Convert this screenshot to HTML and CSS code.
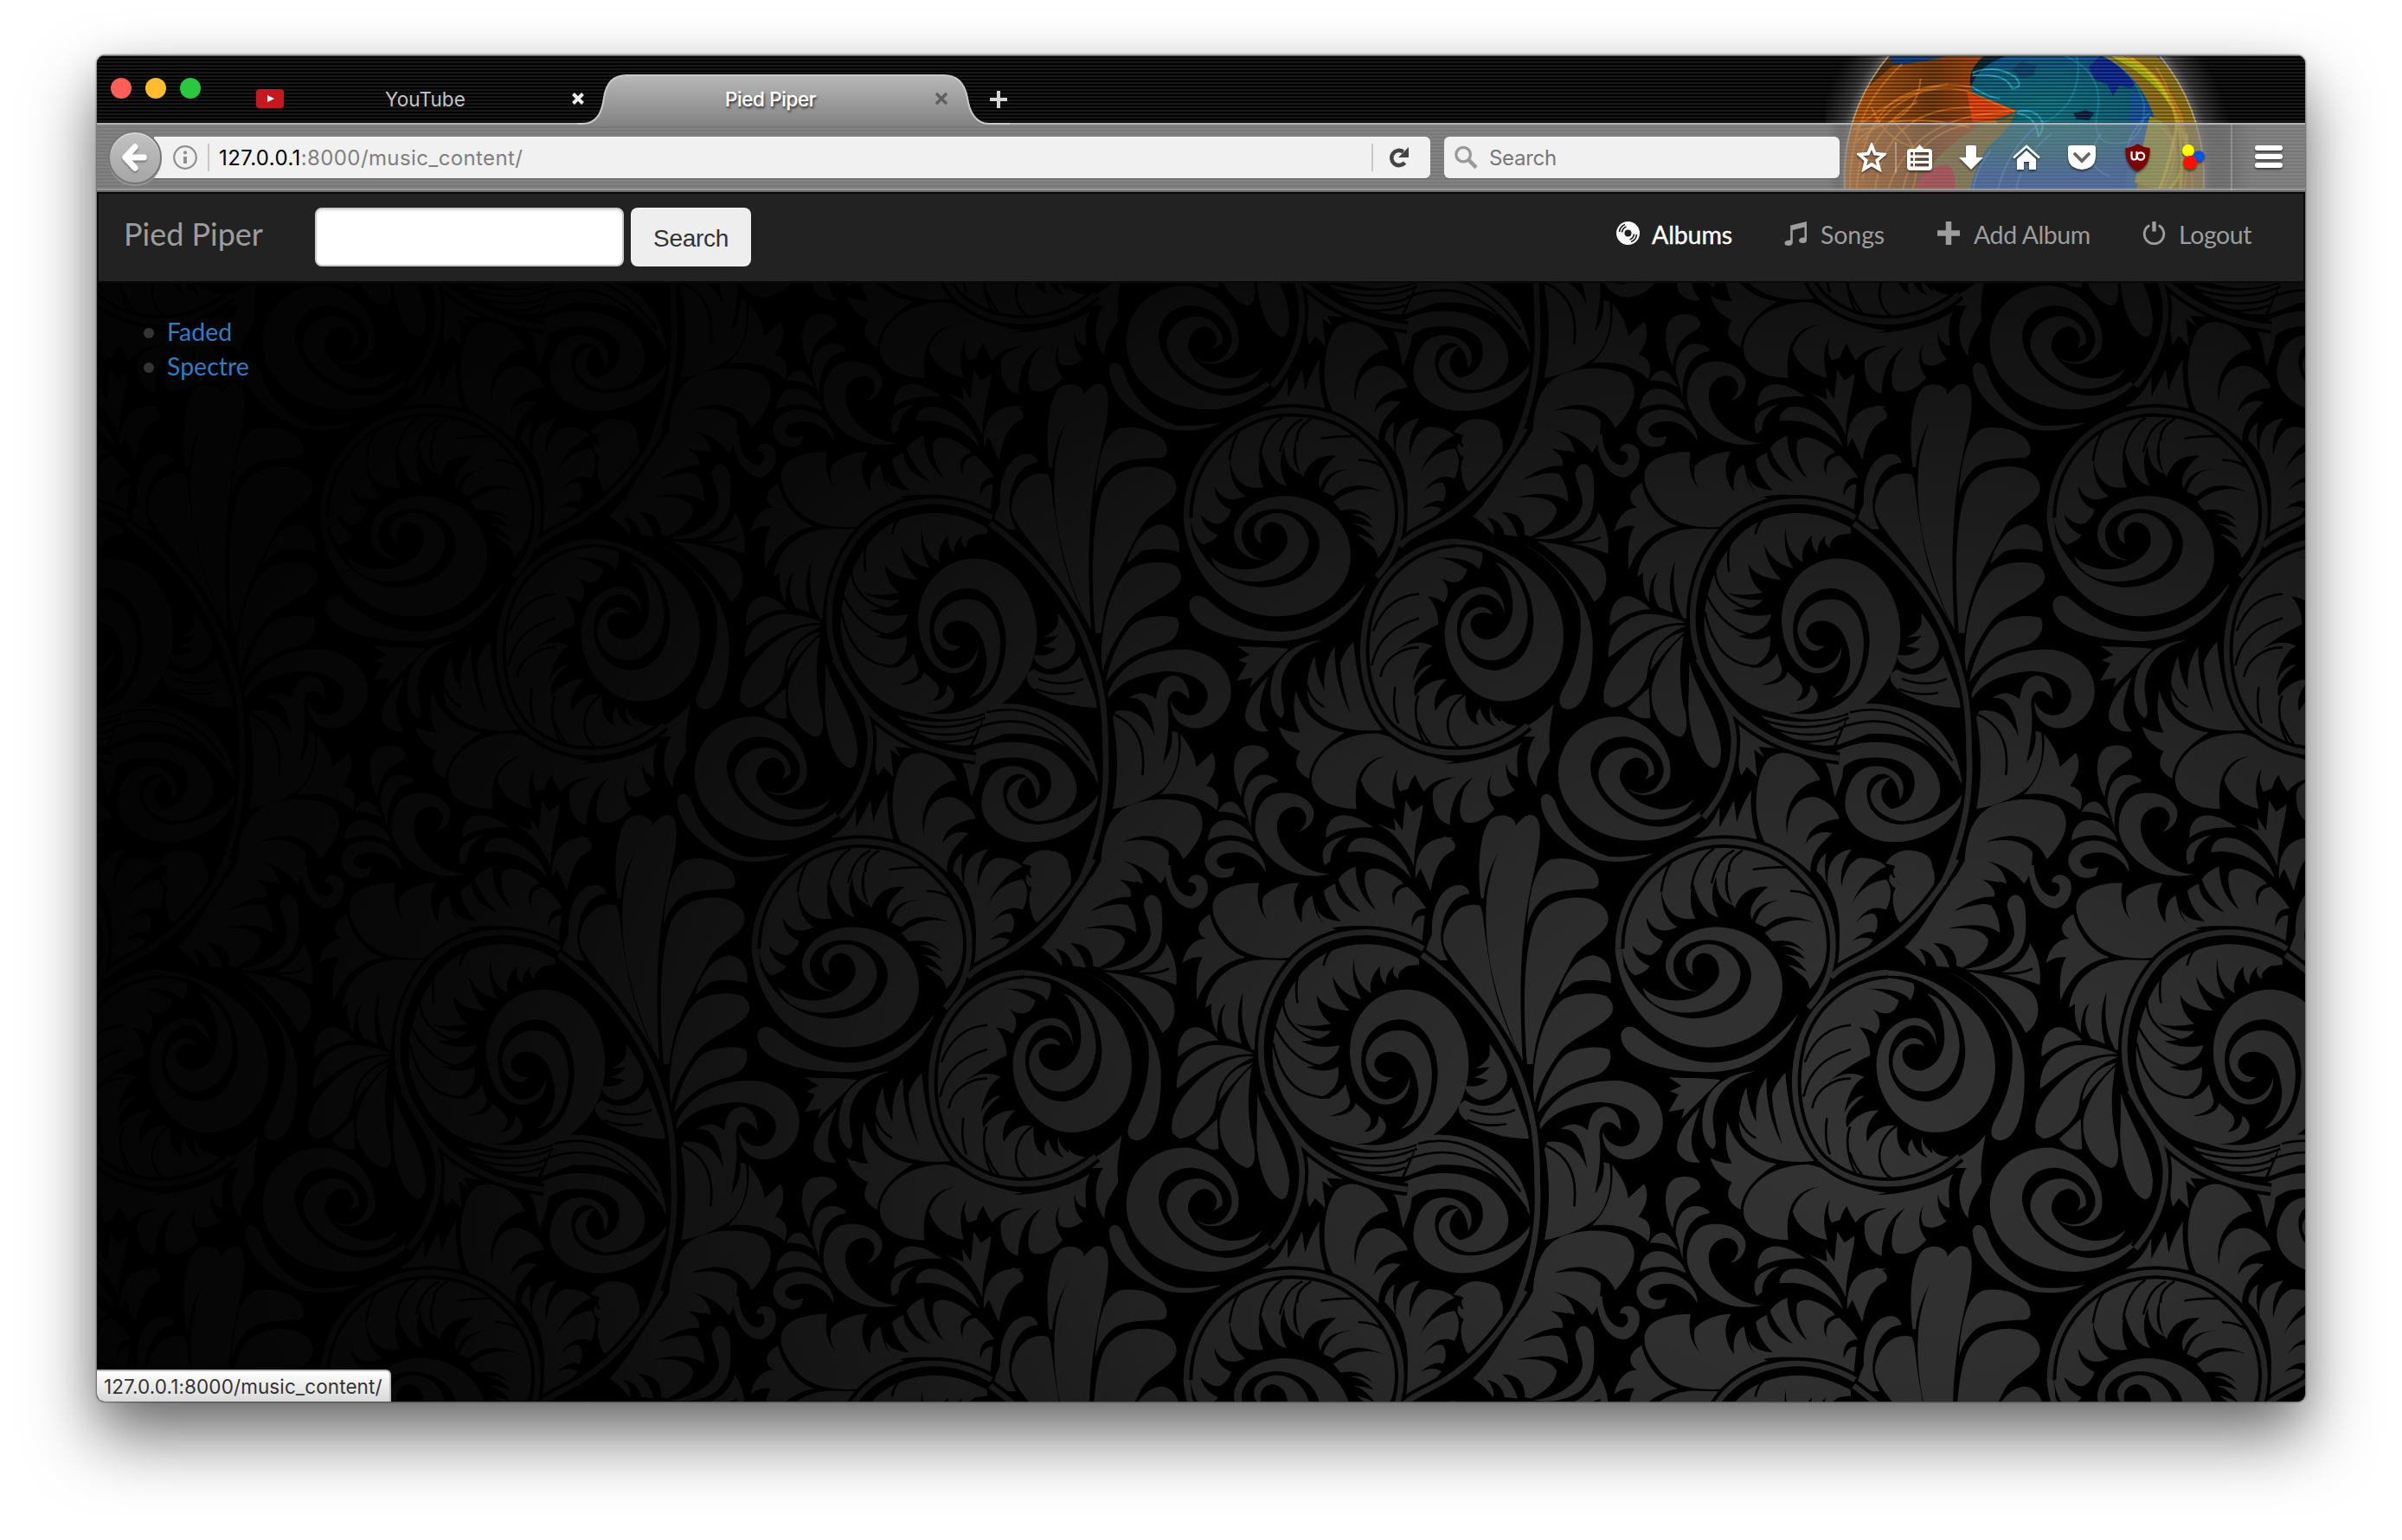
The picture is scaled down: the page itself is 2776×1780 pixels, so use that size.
FILE: index.html
```html
<!DOCTYPE html>
<html lang="en">
<head>
<meta charset="utf-8">
<title>Pied Piper</title>
<link rel="stylesheet" href="styles.css">
</head>
<body>
<main class="window">
  <svg class="persona" viewBox="0 0 1568 474" preserveAspectRatio="none" aria-hidden="true">
    <defs>
      <radialGradient id="halo"><stop offset=".8" stop-color="#fff" stop-opacity=".6"/><stop offset=".88" stop-color="#bbb" stop-opacity=".25"/><stop offset="1" stop-color="#888" stop-opacity="0"/></radialGradient>
      <radialGradient id="sea" cx=".5" cy=".4"><stop offset="0" stop-color="#006a78"/><stop offset=".6" stop-color="#035570"/><stop offset="1" stop-color="#0a3f9a"/></radialGradient>
      <linearGradient id="fur" x1="0" y1="0" x2="1" y2="0"><stop offset="0" stop-color="#b85400"/><stop offset=".5" stop-color="#6a3000"/><stop offset="1" stop-color="#c04000"/></linearGradient>
      <clipPath id="disc"><ellipse cx="649" cy="423" rx="588" ry="640"/></clipPath>
    </defs>
    <ellipse cx="649" cy="423" rx="700" ry="765" fill="url(#halo)"/>
    <g clip-path="url(#disc)">
      <rect width="1568" height="474" fill="#4b2a08"/>
      <path d="M200 0H1130L1240 200V474H420L470 200Z" fill="url(#sea)"/>
      <path d="M210 0H420L380 30Q300 40 220 30Z" fill="#04346e"/>
      <path d="M220 35Q330 25 420-5L520-5Q460 60 480 130Q540 160 625 190Q560 230 520 235Q420 270 420 480H60V180Z" fill="url(#fur)"/>
      <path d="M460 115Q480 150 540 155Q600 180 622 196Q560 220 480 230Z" fill="#e33c00"/>
      <path d="M520 235Q590 225 625 195Q600 250 560 290Q500 330 470 480H290Q340 340 520 235Z" fill="#6e5a20"/>
      <path d="M290 480Q310 380 400 380Q430 400 420 480Z" fill="#b01820"/>
      <path d="M520 0Q460 50 475 110Q500 30 600 0Z" fill="#021c24"/>
      <path d="M610 50L640 20L690 35L680 70L640 80Z" fill="#063c66"/>
      <path d="M860 40L900 0H960L1020 90L1000 115L960 105L940 140L920 100L880 85Z" fill="#06208a"/>
      <path d="M810 200L850 190L880 200L860 225L820 220Z" fill="#021a3a"/>
      <path d="M1000 120Q1080 160 1090 220L1060 480H980Z" fill="#0d4c96"/>
      <path d="M900 0H1080Q1200 110 1240 300V480H1010L1060 330Q1090 250 1070 200Q1020 60 900 0Z" fill="#8a6c10"/>
      <path d="M930 0Q1100 40 1130 180Q1090 110 1010 50Z" fill="#a8b400"/>
      <path d="M1060 210L1110 235Q1190 350 1120 480L1010 440Z" fill="#8c8a28"/>
      <g class="strands orange">
        <path d="M80 480Q70 200 250 30M100 480Q110 260 220 160Q340 80 480 110M120 300Q280 60 480 130Q600 190 620 195"/>
        <path d="M90 260Q230 130 400 100M100 260Q300 240 310 80M160 480Q190 180 480 180M200 480Q270 210 600 195M250 480Q290 230 560 230"/>
        <path d="M150 180Q200 320 350 330M230 240Q330 330 280 480M120 430Q150 250 300 160M100 300Q200 180 470 250"/>
        <path d="M960 0Q1190 90 1200 470M980 0Q1100 60 1160 200Q1200 330 1170 470M1080 40Q1180 200 1130 400M1100 250Q1180 320 1100 470"/>
      </g>
      <g class="strands yellow"><path d="M940 0Q1060 30 1110 130Q1180 240 1160 470M1000 10Q1130 100 1180 320M1150 230Q1130 360 1090 470M1180 270Q1190 390 1120 470"/></g>
      <g class="strands cyan">
        <path d="M480 60Q560 30 620 75Q650 110 610 115Q590 60 480 70M480 110Q530 145 570 150M625 195Q690 180 710 235Q710 270 695 280Q690 210 625 200"/>
        <path class="faint" d="M820 0Q840 90 790 170Q740 230 700 235M780 0Q910 60 890 190Q860 330 990 300Q1050 260 1040 160Q1010 60 910 0"/>
      </g>
      <g class="strands blue"><path d="M700 235Q590 330 560 480M740 270Q640 350 620 480M900 270Q830 380 930 420M1060 200Q960 300 1000 360M480 480Q490 390 540 330"/></g>
    </g>
    <ellipse cx="649" cy="423" rx="588" ry="640" class="rim"/>
  </svg>

  <header class="titlebar">
    <svg class="tabshape" viewBox="0 0 500 58" aria-hidden="true">
      <defs><linearGradient id="tab" x1="0" y1="0" x2="0" y2="1"><stop offset="0" stop-color="#b8b8b8"/><stop offset="1" stop-color="#838383"/></linearGradient></defs>
      <path d="M6 57C24 57 29 42 31 27C33 13 39 1 57 1H424C440 1 448 11 451 27C453 42 460 57 476 57V59H6Z" fill="url(#tab)"/>
      <path d="M0 57H6C24 57 29 42 31 27C33 13 39 1 57 1H424C440 1 448 11 451 27C453 42 460 57 476 57H500" fill="none" stroke="#c9c9c9" stroke-width="2"/>
    </svg>
    <div class="lights"><i class="red"></i><i class="amber"></i><i class="green"></i></div>
    <div class="tab first">
      <svg class="yt" viewBox="0 0 32 22"><rect width="32" height="22" rx="4" fill="#c4191e"/><path d="M13 7L21 11L13 15Z" fill="#fff"/></svg>
      <span class="label">YouTube</span>
      <svg class="x" viewBox="0 0 16 16"><path d="M2.5 2.5L13.5 13.5M13.5 2.5L2.5 13.5" stroke="#eee" stroke-width="4"/></svg>
    </div>
    <div class="tab current">
      <span class="label">Pied Piper</span>
      <svg class="x" viewBox="0 0 16 16"><path d="M2 2L14 14M14 2L2 14" stroke="#5f5f5f" stroke-width="3.4"/></svg>
    </div>
    <svg class="newtab" viewBox="0 0 20 20"><path d="M10 0V20M0 10H20" stroke="#d6d6d6" stroke-width="4"/></svg>
  </header>

  <div class="toolbar">
    <div class="back"><svg viewBox="0 0 32 34"><path d="M16 4L4 17L16 30M5 17H27" fill="none" stroke="#fff" stroke-width="7.5" stroke-linecap="round" stroke-linejoin="round"/></svg></div>
    <div class="url">
      <svg class="info" viewBox="0 0 28 28"><circle cx="14" cy="14" r="12.8" fill="none" stroke="#8f8f8f" stroke-width="2.2"/><circle cx="14" cy="8.4" r="2.1" fill="#8f8f8f"/><path d="M14 13V21" stroke="#8f8f8f" stroke-width="4"/></svg>
      <i class="bar"></i>
      <span class="address">127.0.0.1<span class="path">:8000/music_content/</span></span>
      <i class="bar end"></i>
      <svg class="reload" viewBox="0 0 24 26"><path d="M18.5 19A8.6 8.6 0 1 1 16.8 6.5" fill="none" stroke="#444" stroke-width="4.6"/><path d="M23 1V13H11Z" fill="#444"/></svg>
    </div>
    <div class="searchbox">
      <svg viewBox="0 0 28 28"><circle cx="10.5" cy="10.5" r="8.6" fill="none" stroke="#999" stroke-width="3.4"/><path d="M16.5 16.5L26 26" stroke="#999" stroke-width="4.6"/></svg>
      <span>Search</span>
    </div>
    <div class="tools">
      <svg class="t star" viewBox="0 0 32 32"><path d="M16 3L19.8 12L29.3 12.9L22 19.2L24.3 28.6L16 23.6L7.7 28.6L10 19.2L2.7 12.9L12.2 12Z" fill="none" stroke="#fff" stroke-width="3.6"/></svg>
      <i class="bar pale"></i>
      <svg class="t clip" viewBox="0 0 29 30"><path fill="#fff" fill-rule="evenodd" d="M4 5H10L14.5 0L19 5H25Q29 5 29 9V26Q29 30 25 30H4Q0 30 0 26V9Q0 5 4 5ZM9 9V12.500H25V9ZM9 15.500V19H25V15.500ZM9 22V25.500H25V22ZM4 9V12.500H7V9ZM4 15.500V19H7V15.500ZM4 22V25.500H7V22Z"/></svg>
      <svg class="t down" viewBox="0 0 28 28"><path fill="#fff" d="M8 2Q8 0 10 0H18Q20 0 20 2V14H28L14 28L0 14H8Z"/></svg>
      <svg class="t home" viewBox="0 0 32 30"><path fill="none" stroke="#fff" stroke-width="2.6" d="M1 15.500L16 2L31 15.500"/><path fill="#fff" d="M5 17L16 7L27 17V29H19V20H13V29H5Z"/></svg>
      <svg class="t pocket" viewBox="0 0 32 28"><path fill="#fff" d="M3 0H29Q32 0 32 3V12Q32 21 26 25Q16 31 6 25Q0 21 0 12V3Q0 0 3 0Z"/><path d="M8 10L16 18L24 10" fill="none" stroke="#666" stroke-width="3.8" stroke-linecap="round"/></svg>
      <svg class="t ublock" viewBox="0 0 28 32"><path fill="#7d0004" d="M14 0Q20 4.500 28 5Q29 25 14 32Q-1 25 0 5Q8 4.500 14 0Z"/><path d="M7 9V15Q7 18.500 10 18.500T13 15.500V9" fill="none" stroke="#fff" stroke-width="2.2"/><circle cx="17.500" cy="14.500" r="4.200" fill="none" stroke="#fff" stroke-width="2.2"/></svg>
      <svg class="t dots" viewBox="0 0 26 30"><circle cx="7" cy="7" r="7" fill="#ff0"/><circle cx="19.500" cy="13.500" r="6.300" fill="#0655e0"/><circle cx="9" cy="21" r="8" fill="#f81000"/></svg>
      <i class="bar tall"></i>
      <svg class="t menu" viewBox="0 0 32 28"><path d="M3 3H29M3 13H29M3 23H29" stroke="#fff" stroke-width="6" stroke-linecap="round"/></svg>
    </div>
  </div>

  <section class="page">
    <svg class="damask" viewBox="112 222 2552 1398" aria-hidden="true">
      <defs>
        <radialGradient id="shade" gradientUnits="userSpaceOnUse" cx="0" cy="0" r="1" gradientTransform="translate(2150 1330) scale(2050 1450)">
          <stop offset="0" stop-opacity="0"/><stop offset=".2" stop-opacity=".1"/><stop offset=".45" stop-opacity=".38"/><stop offset=".62" stop-opacity=".6"/><stop offset=".8" stop-opacity=".82"/><stop offset="1" stop-opacity=".92"/>
        </radialGradient>
        <g id="leaves">
          <path d="M0 365C150 350 300 420 390 530C450 620 460 720 420 810C370 900 290 935 210 925C110 910 30 800 32 690C35 590 100 530 170 530C220 535 240 580 240 625C230 580 200 555 160 555C110 560 70 620 75 690C85 770 140 820 210 820C290 810 340 740 340 640C335 520 270 430 150 390C100 380 50 380 0 400Z"/>
          <path d="M205 445C280 460 320 560 320 630C315 730 250 785 195 785C130 785 85 730 88 680C92 630 125 600 160 600C180 600 195 615 198 628C170 610 120 620 122 660C125 700 160 715 190 712C240 700 270 650 268 590C265 520 240 470 205 445Z"/>
          <path d="M70 390C-60 400-190 490-230 620C-270 760-250 920-160 1020C-90 1080-20 1110 70 1108C170 1105 260 1060 320 1010Q240 1020 220 975Q235 1010 215 990Q190 970 190 940Q180 990 210 1015Q165 1000 155 950Q130 980 150 1010Q95 990 105 905Q40 890 0 960Q-15 900 40 850Q-30 850-70 910Q-90 860-10 800Q-50 800-80 860Q-60 760-10 735Q-80 700-160 770Q-60 690 10 660Q10 600-30 560Q-60 540-170 580Q-20 540 30 585Q60 540 20 500Q90 540 110 470Q40 420-30 430Q120 420 150 470Q170 430 160 410Q120 395 70 390Z"/>
          <path d="M1200 640C1205 510 1300 425 1410 432C1530 440 1612 560 1612 690C1612 850 1500 990 1300 990C1200 990 1080 930 1010 860L1040 880C1120 960 1230 975 1300 970C1420 960 1500 870 1505 720C1505 620 1450 535 1370 535C1290 540 1235 600 1240 690C1245 770 1290 815 1330 812C1380 805 1400 770 1408 735C1410 800 1370 830 1320 830C1250 825 1200 740 1200 640Z"/>
          <path d="M1375 915C1440 900 1485 830 1485 720C1480 620 1430 570 1365 573C1300 575 1255 630 1255 680C1260 730 1295 755 1325 752L1350 735C1310 740 1285 710 1285 690C1290 655 1320 645 1350 648C1400 655 1430 700 1438 780C1440 840 1410 890 1375 915Z"/>
          <path d="M1440 325C1300 245 1150 265 1060 345C960 440 920 600 935 700C965 860 1080 960 1200 968C1300 970 1330 930 1325 900Q1315 875 1300 870Q1300 920 1250 925Q1290 890 1260 860L1220 825Q1210 870 1130 870Q1210 850 1200 810L1185 760Q1150 815 1090 810Q1170 780 1160 700Q1110 725 1050 700Q1150 690 1165 625Q1090 640 1030 610Q1110 610 1135 575Q1060 580 1010 550Q1060 565 1135 550Q1090 520 1085 450Q1110 500 1200 505Q1150 460 1140 385Q1170 450 1240 465Q1200 400 1215 320Q1210 410 1275 445Q1260 400 1305 350Q1300 390 1325 415Q1320 380 1355 350Q1340 380 1370 395Q1360 370 1400 350L1440 345Z"/>
          <path d="M665 1230C700 1265 780 1260 810 1200C835 1130 770 1000 640 980C520 975 425 1060 425 1180C430 1320 560 1410 720 1410C850 1405 960 1320 1010 1200L1000 1190C960 1300 860 1365 770 1362C640 1355 535 1240 537 1150C545 1080 600 1045 660 1050C740 1060 800 1120 790 1180C770 1250 710 1260 665 1230Z"/>
          <path d="M895 1265C870 1320 810 1340 745 1338C650 1325 565 1240 565 1180C570 1120 620 1085 680 1087C730 1095 765 1140 758 1180L725 1200C750 1175 740 1130 700 1122C660 1125 635 1160 640 1200C660 1260 740 1305 800 1302C840 1300 870 1290 895 1265Z"/>
          <path d="M365 1270C370 1240 400 1240 415 1275C440 1360 510 1440 600 1465C660 1470 720 1460 755 1455C700 1485 620 1490 560 1475C450 1430 370 1360 365 1270Z"/>
          <path d="M560 0C555 80 600 150 655 150C700 140 720 80 700 50C680 25 640 30 640 60C670 55 680 90 650 108C610 110 580 60 578 0Z"/>
          <path d="M130 285C220 200 260 60 330 20C380 0 440 20 460 60L400 50Q450 80 440 110Q380 105 300 160Q400 125 430 140Q460 180 460 235Q400 190 280 220Q400 210 420 260Q420 310 330 355L310 350Q310 270 230 270Q270 300 285 355L240 350Q230 300 180 290Q210 330 200 350Q170 310 130 285Z"/>
          <path d="M485 140C490 90 540 90 548 150C555 250 545 290 500 330C450 365 380 370 340 360C430 350 500 300 510 240C510 200 490 170 485 140Z"/>
          <path d="M460 375C520 350 550 320 565 272C590 310 605 360 598 415C560 400 520 390 460 375Z"/>
          <path d="M350 370C400 380 520 390 570 440C605 480 600 550 550 582C520 520 450 430 350 370Z"/>
          <path d="M280 370C400 420 540 560 545 720C548 850 520 950 460 955C425 950 420 920 450 870C500 780 510 680 500 610C480 520 390 420 280 370Z"/>
          <path d="M410 935C400 1000 390 1040 397 1100C370 1150 350 1170 350 1225C310 1180 310 1100 345 1050L300 1050L320 1010C360 990 390 960 410 935Z"/>
          <path d="M-80 1135C60 1160 200 1130 300 1070C270 1110 290 1180 285 1190Q250 1180 245 1140Q240 1200 275 1235Q230 1270 195 1250Q180 1220 195 1180Q160 1240 205 1300Q150 1360 100 1345Q70 1320 100 1230L130 1190Q50 1240 50 1355Q-10 1340-10 1250Q-10 1210 70 1190Q0 1190-40 1240Q-80 1180-80 1135Z"/>
          <path d="M605 665C600 600 630 560 670 562C710 570 740 600 745 608C690 610 650 630 605 665Z"/>
          <path d="M600 775C595 700 640 640 720 625C780 620 840 640 868 655C740 650 680 720 600 775Z"/>
          <path d="M585 930C570 850 640 780 680 740C740 690 800 655 870 665C780 700 740 760 735 830C725 900 640 950 610 948Z"/>
          <path d="M745 820C755 740 800 700 865 685C820 730 790 760 745 820Z"/>
          <path d="M860 700C850 760 840 830 860 940C880 1000 870 1050 845 1050C780 1030 740 950 750 880C760 820 810 740 860 700Z"/>
          <path d="M665 950L740 880L745 985C710 990 690 980 665 950Z"/>
          <path d="M880 790C900 880 980 980 990 1090C990 1140 980 1160 960 1158C900 1130 870 1000 878 900Z"/>
          <path d="M725 150C720 100 780 60 885 62C870 130 890 200 990 242C900 210 890 150 900 110C930 80 980 60 1025 62C990 110 1010 170 1035 200C1030 150 1040 120 1070 105C1080 180 1100 210 1170 230C1080 260 1040 300 1000 320C930 330 820 320 770 250C740 210 725 180 725 150Z"/>
          <path d="M715 170C730 240 780 300 840 320C740 340 700 400 670 470C665 400 670 350 690 320C660 315 640 325 620 340C630 290 660 255 700 255C670 240 660 200 715 170Z"/>
          <path d="M700 495C710 400 790 330 900 328L985 330C920 400 890 500 885 640L860 640C830 580 820 540 830 440C800 520 815 580 825 620L775 600Q740 540 770 480Q740 500 740 585Q715 540 720 480Z"/>
          <path d="M1085 150Q1100 190 1170 195Q1120 150 1110 90Q1130 70 1150 65Q1150 130 1240 165Q1180 110 1160 50Q1180 20 1220 5Q1220 100 1290 155Q1240 80 1255 25Q1280 0 1330 25Q1380 50 1385 65Q1330 80 1355 145Q1350 80 1400 75Q1440 110 1465 150Q1410 150 1415 215Q1430 170 1460 175L1450 270C1350 210 1200 200 1130 220Q1090 190 1085 150Z"/>
          <path d="M1145 1420C1100 1350 1100 1200 1150 1130C1200 1080 1290 1110 1335 1200C1260 1210 1200 1290 1220 1390C1220 1300 1260 1250 1320 1260C1370 1275 1400 1320 1400 1335C1340 1340 1290 1370 1285 1420C1310 1380 1350 1375 1375 1385C1340 1420 1300 1450 1300 1520C1250 1470 1200 1440 1145 1420Z"/>
          <path d="M895 1400C950 1370 970 1330 985 1290V1365Q1010 1320 1035 1270L1045 1345Q1060 1290 1095 1235C1090 1300 1100 1360 1115 1405L1000 1395Z"/>
          <path d="M1040 980C1090 1050 1140 1070 1190 1090L1120 1085L1140 1120L1105 1095L1115 1190L1080 1155L1060 1185C1040 1130 1060 1050 1040 980Z"/>
          <path d="M1300 1110L1420 1120L1410 1190L1385 1260C1370 1200 1370 1150 1340 1130Z"/>
          <path d="M1130 975C1230 1010 1350 1000 1430 975L1380 1080C1280 1085 1180 1040 1130 975Z"/>
          <path d="M120 190C180 130 230 60 225 0C220-50 150-60 100-40Q80 20 150 50Q100 30 90 50Q130 70 135 100Q140 130 120 190Z"/>
          <g transform="translate(1500)">
            <path d="M-130 1110C-60 1070 0 1065 60 1070C170 1080 255 1160 250 1240C240 1310 170 1345 110 1342C50 1330 5 1290 8 1250C15 1210 50 1192 80 1190C40 1220 30 1270 80 1300C150 1290 180 1220 150 1165C110 1120 40 1118-20 1125C-60 1130-80 1150-100 1165Z"/>
            <path d="M-80 1280C-75 1210-40 1155 20 1152C80 1150 135 1190 120 1250L110 1270C110 1220 80 1170 40 1180C-10 1190-15 1250 10 1300C60 1370 140 1360 210 1335C270 1310 310 1280 330 1240C320 1340 200 1415 90 1415C0 1415-80 1360-80 1280Z"/>
            <path d="M618 260C620 420 720 620 930 632C1090 635 1200 540 1200 420C1200 300 1090 215 970 215C870 215 795 280 795 350C800 410 850 440 905 437C850 430 820 390 822 340C830 285 890 258 950 260C1030 265 1090 320 1092 380C1090 470 1000 530 890 532C770 525 690 450 650 350L640 260Z"/>
            <path d="M715 425C730 480 790 510 860 512C980 510 1055 450 1055 370C1045 310 990 272 940 274C890 280 862 310 865 340C868 365 880 375 892 380C880 340 890 308 930 305C965 310 985 340 980 380C965 430 900 470 830 470C780 468 740 450 715 425Z"/>
            <path d="M640 590C645 555 680 550 710 580C780 640 860 685 960 685C1080 685 1190 600 1255 515C1200 640 1080 715 950 718C800 720 640 680 640 590Z"/>
            <path d="M645 300C640 100 800-65 1000-68C1150-65 1240 0 1300 90C1380 220 1370 350 1295 430Q1290 400 1270 385L1220 345Q1250 350 1285 370Q1240 310 1200 310Q1240 310 1280 325Q1240 280 1200 280Q1240 270 1275 300Q1240 250 1165 265L1140 235Q1220 170 1310 200Q1200 150 1140 215L1105 200Q1130 120 1210 120Q1110 120 1095 190Q1070 140 1150 75Q1060 70 1035 150Q1000 100 1015 0Q980 90 1030 140Q970 120 970 40Q940 110 978 180Q920 170 890 60Q870 130 898 185Q800 200 780 90Q780 180 835 215Q760 250 728 180Q730 240 785 262Q780 290 750 310Q720 320 680 280Q690 330 740 350Q730 370 690 383Q660 370 645 300Z"/>
            <path d="M355 910C390 800 500 740 640 748C740 765 790 830 785 900C780 970 720 1025 650 1020C600 1010 575 975 577 925C600 990 690 1000 705 910C705 850 630 822 560 822C480 830 400 850 355 925Z"/>
            <path d="M375 985C390 1060 400 1180 375 1300C450 1290 530 1250 560 1220C600 1170 610 1100 600 1035L580 1030C585 1080 570 1110 550 1140C560 1080 575 1020 565 940C565 890 600 870 640 920C640 860 610 835 580 838C530 850 530 900 525 920C490 890 460 895 430 915C480 910 510 950 522 1050C500 990 450 950 385 960Z"/>
            <path d="M1020 1380C1060 1370 1080 1330 1070 1300C1050 1250 980 1235 930 1250C880 1270 865 1330 870 1380C890 1470 1000 1560 1130 1525C1050 1530 950 1450 945 1370C940 1310 990 1285 1020 1295C1055 1310 1055 1350 1020 1380Z"/>
            <path d="M905 1520C910 1470 850 1410 780 1410C720 1415 690 1450 695 1490C710 1540 760 1550 790 1530L800 1500C770 1515 740 1510 735 1480C740 1455 790 1445 830 1455C870 1470 890 1490 905 1520Z"/>
            <path d="M155 115C140 20 150-120 190-160C230-190 290-160 270-130C220-60 170 20 165 115Z"/>
            <path d="M175 110C190-20 240-120 310-170C360-190 365-130 355-60C340 60 270 200 300 680L280 640C200 450 160 280 175 110Z"/>
            <path d="M315 210C320 100 340 0 400-20C450-30 520-15 550 20C575 60 560 80 540 82C480 85 420 85 380 110C350 130 325 170 315 210Z"/>
            <path d="M315 690C295 450 310 280 340 200C370 130 440 110 500 113C580 120 610 170 590 210C560 260 500 270 470 330C400 470 350 540 335 690Z"/>
            <path d="M25 240C40 170 90 125 150 140C165 160 160 200 185 340C200 450 240 560 290 665L260 610C180 480 90 380 50 320C30 290 20 270 25 240Z"/>
            <path d="M425 450C440 380 490 315 545 313C590 320 610 360 605 410C560 395 500 395 470 410Z"/>
            <path d="M335 770C340 600 390 500 440 465C490 440 560 440 590 455C620 480 620 510 590 535C540 580 460 600 420 660C380 720 355 760 340 830Z"/>
            <path d="M350 860C370 760 420 670 460 650C500 630 570 625 600 640C615 680 590 720 540 735C480 750 420 770 350 860Z"/>
            <path d="M-15 240C-20 130 30 60 90 70Q115 80 115 100C60 100 30 160 22 200C10 240 15 290 40 330L-40 330Q-40 290-15 240Z"/>
            <path d="M-60 0Q-40-60 30-100Q80-80 60-50Q0-30-20 90Z"/>
            <path d="M185 620C230 680 250 720 245 740C240 790 190 810 150 815C110 800 95 780 105 765Q150 775 180 745L130 735Q160 730 185 700L135 705Q170 690 185 660Z"/>
            <path d="M100 815C150 850 220 840 260 770L310 900L325 950L250 945C150 920 60 880 80 830Z"/>
            <path d="M-60 940C60 920 180 960 250 1030C300 1090 320 1150 325 1215C260 1080 150 1030 0 1040L-110 1080L-80 1010Z"/>
            <path d="M610 1040C640 1080 660 1110 665 1155L720 1105C740 1140 730 1180 700 1220C740 1230 750 1260 735 1305C690 1260 620 1240 540 1250C600 1190 615 1120 610 1040Z"/>
            <path d="M335 1480C340 1380 370 1320 430 1290C500 1260 600 1260 660 1290C700 1330 700 1390 620 1475C590 1400 500 1370 410 1415C480 1400 540 1410 570 1450C570 1500 560 1540 540 1560Q500 1500 410 1480Q470 1500 480 1560L400 1530L300 1540Z"/>
            <path d="M60 1490C90 1440 150 1430 190 1460C230 1500 230 1540 220 1580L150 1560Q130 1500 60 1490Z"/>
            <path d="M1318 20Q1320-20 1352-42Q1340 20 1358 75Q1345-40 1440-55Q1395 0 1405 75Q1420-10 1470-25Q1530-25 1560 5Q1480 40 1440 135Q1480 60 1560 50Q1590 90 1560 155Q1500 130 1455 200Q1490 160 1520 170Q1540 200 1520 235Q1490 220 1440 265Q1480 240 1515 260L1480 305C1440 310 1400 330 1380 375C1420 200 1390 90 1318 20Z"/>
            <path d="M1600 190Q1570 120 1592 80Q1560 60 1575 30Q1600 70 1640 80Q1580 50 1585 15C1620-50 1700-40 1725 20C1740 90 1690 150 1610 200Z"/>
            <path d="M805 735C860 740 920 735 985 745C940 790 900 830 850 880L860 845L805 855L840 795L810 785L850 765Z"/>
            <path d="M1105 715C1020 720 960 760 935 820C915 880 915 960 960 985C980 960 960 930 960 900C950 820 1000 740 1105 715Z"/>
            <path d="M915 840C860 890 820 960 840 1000C860 1030 890 1035 915 1030C880 990 870 950 915 840Z"/>
            <path d="M1210 720C1220 850 1250 960 1320 1025C1200 1040 1100 1010 1060 940C1040 890 1050 820 1075 770Q1080 840 1110 890Q1100 800 1145 735Q1140 860 1200 970Q1160 840 1165 790Q1180 750 1210 720Z"/>
            <path d="M1010 890C1030 960 1080 1020 1180 1035C1110 1080 1060 1130 1055 1195C1010 1170 1000 1140 1025 1100C980 1080 960 1050 950 1015C980 1030 1000 1035 1025 1035C1000 990 1000 940 1010 890Z"/>
            <path d="M1065 1190C1075 1110 1160 1038 1290 1038C1370 1050 1450 1130 1560 1135L1500 1150Q1420 1150 1400 1230L1370 1240Q1350 1200 1365 1160Q1330 1210 1355 1300Q1260 1280 1235 1200Q1260 1130 1330 1115Q1200 1130 1220 1300C1130 1300 1060 1260 1065 1190Z"/>
            <path d="M1290 1350L1355 1375L1350 1330L1380 1375L1390 1270L1415 1310L1450 1285C1450 1340 1420 1400 1420 1500C1390 1430 1350 1380 1290 1350Z"/>
            <path d="M1115 1400C1110 1350 1140 1320 1180 1322C1220 1325 1250 1345 1280 1365C1220 1360 1150 1370 1115 1400Z"/>
            <path d="M1110 1495C1090 1440 1110 1410 1190 1390C1140 1420 1130 1450 1130 1480Z"/>
            <path d="M1190 1440C1200 1400 1240 1390 1290 1410C1350 1440 1390 1480 1410 1540C1350 1470 1270 1440 1190 1450Z"/>
            <path d="M1425 1540C1420 1450 1460 1390 1560 1400C1500 1420 1460 1470 1425 1540Z"/>
            <path d="M820 1260C790 1200 780 1110 830 1085C880 1070 920 1090 915 1120C890 1150 830 1150 820 1260Z"/>
            <path d="M830 1280C830 1210 870 1170 920 1185C960 1200 950 1210 930 1210C870 1230 850 1290 855 1370Z"/>
            <path d="M740 1310C760 1270 790 1265 810 1290L840 1335C810 1315 780 1310 740 1310Z"/>
            <path d="M705 1410C710 1350 750 1325 800 1345C840 1365 860 1390 865 1415C810 1385 750 1385 705 1410Z"/>
          </g>
        </g>
        <g id="veins">
          <path d="M940 560C980 640 1040 690 1110 700M935 620C960 740 1020 810 1130 805M970 450C960 540 1030 600 1110 610M1020 380Q1010 430 1018 475M1110 345Q1120 290 1170 275M1130 990C1250 1030 1350 1020 1430 985M1170 1020C1250 1050 1350 1050 1410 1020M1215 1052C1270 1075 1340 1070 1390 1050"/>
          <path d="M100 905C20 960 30 1060 90 1090M-60 910C-80 960-60 1050-30 1080M-140 880Q-150 950-130 1000M-220 800C-200 700-130 660-60 640M-215 680C-180 590-120 560-60 555M-190 840C-180 780-120 740-60 740M-60 1000Q-40 1050-20 1070"/>
          <path d="M460 375Q530 380 570 360"/>
          <g transform="translate(1500)">
            <path d="M780 90C790 20 810-20 860-50M885 80C890 20 920-30 960-55M955 60C970 0 990-30 1030-50M1100 15Q1160 5 1220 8M1230 90Q1280 90 1320 120M1015 20Q1010-20 1060-50"/>
            <path d="M-60 965C80 930 200 1000 290 1130M-100 1020C60 960 180 1010 310 1190M120 850Q200 880 270 850M110 885Q170 910 240 898M240 945Q300 955 330 955M385 975C460 1010 490 1080 478 1180M1045 860Q1060 920 1105 945"/>
          </g>
        </g>
        <g id="gaps">
          <path d="M1455 290C1300 200 1120 220 1010 330C920 430 880 560 895 690C910 800 960 880 1040 970C1150 1070 1270 1110 1400 1125"/>
          <path d="M310-20C220 150 100 260-20 320C-60 340-100 360-125 390"/>
          <path d="M70 372C-70 378-195 480-234 620C-270 760-250 920-160 1020C-90 1080-20 1105 70 1105C170 1105 250 1070 320 1010"/>
          <path d="M910 780C980 900 1030 950 1035 1060C1035 1160 1000 1250 930 1330"/>
          <g transform="translate(1500)"><path d="M-50 310C60 390 180 500 270 690C340 850 350 960 350 1100C360 1280 320 1420 260 1560"/><path d="M1290 495C1400 380 1400 200 1310 80C1230-20 1150-78 1000-82C820-85 630 60 630 290"/></g>
        </g>
      </defs>
      <defs>
        <g id="leafrow"><use href="#leaves"/><use href="#leaves" x="2994"/><use href="#leaves" x="5988"/><use href="#leaves" x="8982"/><use href="#leaves" x="11976"/></g>
        <g id="veinrow"><use href="#veins"/><use href="#veins" x="2994"/><use href="#veins" x="5988"/><use href="#veins" x="8982"/><use href="#veins" x="11976"/></g>
        <g id="gaprow"><use href="#gaps"/><use href="#gaps" x="2994"/><use href="#gaps" x="5988"/><use href="#gaps" x="8982"/><use href="#gaps" x="11976"/></g>
      </defs>
      <g transform="translate(-836 3.3) scale(.33333)">
        <g class="leaf"><use href="#leafrow"/><use href="#leafrow" x="-1497" y="1495"/><use href="#leafrow" y="2990"/><use href="#leafrow" x="-1497" y="4485"/></g>
        <g class="vein"><use href="#veinrow"/><use href="#veinrow" x="-1497" y="1495"/><use href="#veinrow" y="2990"/><use href="#veinrow" x="-1497" y="4485"/></g>
        <g class="gap"><use href="#gaprow"/><use href="#gaprow" x="-1497" y="1495"/><use href="#gaprow" y="2990"/><use href="#gaprow" x="-1497" y="4485"/></g>
        <g class="stem"><use href="#gaprow"/><use href="#gaprow" x="-1497" y="1495"/><use href="#gaprow" y="2990"/><use href="#gaprow" x="-1497" y="4485"/></g>
      </g>
      <rect x="112" y="222" width="2552" height="1398" fill="url(#shade)"/>
    </svg>

    <nav class="navbar">
      <a class="brand">Pied Piper</a>
      <div class="field"></div>
      <div class="button">Search</div>
      <div class="links">
        <a class="active albums"><svg viewBox="0 0 27 27"><circle cx="13.500" cy="13.500" r="13.500" fill="#fff"/><circle cx="13.500" cy="13.500" r="4" fill="#222"/><path d="M3.500 12A10 10 0 0 1 10 3.500M6.500 12.500A7.500 7.500 0 0 1 11.500 6M23.500 15A10 10 0 0 1 17 23.500M20.500 14.500A7.500 7.500 0 0 1 15.500 21" fill="none" stroke="#222" stroke-width="1.700"/></svg><span>Albums</span></a>
        <a class="songs"><svg viewBox="0 0 26 28"><path d="M6.700 4.500L25.500 0V21.500Q25.500 25 21 25Q16.500 25 16.500 22Q17 18 23 18.500V6.500L9.300 10V24Q9 28 4.500 28Q0 28 0 25Q0 21.500 6.700 21.500Z" fill="#9d9d9d"/></svg><span>Songs</span></a>
        <a class="add"><svg viewBox="0 0 26 26"><path d="M13 1V25M1 13H25" stroke="#9d9d9d" stroke-width="6.500" stroke-linecap="square" stroke-linejoin="round"/></svg><span>Add Album</span></a>
        <a class="logout"><svg viewBox="0 0 28 28"><path d="M8.500 4.600A11.700 11.700 0 1 0 19.500 4.600" fill="none" stroke="#9d9d9d" stroke-width="3"/><path d="M14 0V12" stroke="#9d9d9d" stroke-width="4.500"/></svg><span>Logout</span></a>
      </div>
    </nav>
    <ul class="songlist"><li><a>Faded</a></li><li><a>Spectre</a></li></ul>
    <div class="status">127.0.0.1:8000/music_content/</div>
  </section>
</main>
</body>
</html>
```
FILE: styles.css
```css
* { box-sizing: border-box; }
body { margin: 0; background: #fff; font-family: Inter, "Liberation Sans", sans-serif; height: 1780px; overflow: hidden; }
svg { display: block; flex: none; }
.window {
  position: relative; width: 2552px; height: 1556px; margin: 64px 112px; display: flex; flex-direction: column;
  border-radius: 9px; overflow: hidden; background: #000;
  box-shadow: 0 0 2px 1px rgba(0,0,0,.45), 0 40px 80px rgba(0,0,0,.56), 0 10px 40px rgba(0,0,0,.1);
}
.persona { position: absolute; left: 1998px; top: 0; width: 554px; height: 158px; }
.strands path { fill: none; stroke-width: 6; opacity: .5; }
.orange path { stroke: #ff8c1a; }
.yellow path { stroke: #e0cf20; stroke-width: 10; }
.cyan path { stroke: #20b4d0; opacity: .8; }
.cyan .faint { opacity: .35; }
.blue path { stroke: #3a8ce0; }
.rim { fill: none; stroke: #ffd9a0; stroke-width: 5; opacity: .6; }

.titlebar {
  position: relative; height: 80px; display: flex; align-items: flex-start; flex: none;
  background: repeating-linear-gradient(rgba(5,5,5,.25) 0 2px, rgba(255,255,255,.09) 2px 4px);
  border-top: 1px solid #666; border-bottom: 2px solid #b4b4b4;
}
.tabshape { position: absolute; left: 555px; top: 21px; width: 500px; height: 58px; }
.lights { display: flex; gap: 16px; margin: 25px 0 0 16px; }
.lights i { width: 24px; height: 24px; border-radius: 50%; }
.red { background: #ff5f57; }
.amber { background: #ffbd2e; }
.green { background: #28c940; }
.tab { display: flex; position: relative; height: 32px; margin-top: 33px; align-items: center; font-size: 22.500px; }
.first { margin-left: 64px; width: 380px; color: #c4c4c4; }
.first .yt { width: 32px; height: 22px; }
.first .label { margin-left: 117px; width: 93px; letter-spacing: .1px; }
.first .x { margin-left: 122px; }
.x { width: 16px; height: 16px; }
.current { margin-left: 162px; width: 262px; color: #fff; font-weight: 500; text-shadow: 1px 2px 3px #222, 0 0 1px #fff; }
.current .label { width: 106px; white-space: nowrap; letter-spacing: -.4px; }
.current .x { margin-left: 136px; }
.newtab { position: relative; width: 20px; height: 20px; margin: 40px 0 0 44px; }

.toolbar {
  position: relative; height: 78px; display: flex; align-items: center; flex: none; padding-bottom: 2px;
  background: repeating-linear-gradient(rgba(255,255,255,.03) 0 2px, rgba(0,0,0,.05) 2px 4px), linear-gradient(90deg, #7e7e7e 0 2000px, rgba(150,150,150,.5) 2030px 2400px, #7e7e7e 2490px);
  box-shadow: inset 0 -2px #666, inset 0 -4px #999;
}
.back { position: relative; z-index: 1; width: 62px; height: 62px; margin-left: 13px; border-radius: 50%; display: flex; align-items: center; justify-content: center; background: linear-gradient(#c2c2c2, #a6a6a6); border: 2px solid #777; box-shadow: 0 2px #999, inset 0 2px #d2d2d2; }
.back svg { width: 30px; height: 34px; filter: drop-shadow(0 2px 1px #777); }
.url, .searchbox { display: flex; align-items: center; height: 48px; background: #f1f1f1; border-radius: 0 6px 6px 0; box-shadow: 0 1px #666; font-size: 24px; }
.url { width: 1475px; margin-left: -9px; padding-left: 22px; }
.info { width: 28px; height: 28px; }
.bar { width: 2px; height: 32px; background: #c8c8c8; flex: none; }
.url .bar { margin-left: 12px; }
.address { margin-left: 11px; width: 1332px; letter-spacing: .39px; padding-top: 1px; }
.url .end { margin-left: 0; }
.path { color: #7f7f7f; }
.reload { width: 24px; height: 26px; margin-left: 18px; }
.searchbox { width: 457px; margin-left: 16px; border-radius: 6px; padding-left: 12px; color: #777; }
.searchbox svg { width: 27px; height: 28px; }
.searchbox span { margin-left: 13px; letter-spacing: -.3px; padding-top: 1px; }
.tools { display: flex; align-items: center; height: 100%; }
.t { filter: drop-shadow(0 2px 1px rgba(0,0,0,.5)); }
.star { width: 34px; height: 34px; margin-left: 20px; }
.pale { height: 36px; margin-left: 10px; background: rgba(255,255,255,.3); }
.clip { width: 29px; height: 30px; margin-left: 12px; }
.down { width: 28px; height: 28px; margin-left: 31px; }
.home { width: 32px; height: 30px; margin-left: 34px; }
.pocket { width: 32px; height: 28px; margin-left: 32px; }
.ublock { width: 29px; height: 32px; margin-left: 34px; }
.dots { width: 26px; height: 30px; margin-left: 37px; }
.tall { height: 76px; margin-left: 30px; background: rgba(255,255,255,.2); }
.menu { width: 32px; height: 28px; margin-left: 26px; }

.page { position: relative; flex: 1; }
.damask { position: absolute; inset: 0; width: 2552px; height: 1398px; }
.leaf { fill: #333; }
.vein { fill: none; stroke: #000; stroke-width: 8; stroke-linecap: round; }
.gap { fill: none; stroke: #000; stroke-width: 44; }
.stem { fill: none; stroke: #2e2e2e; stroke-width: 20; }
.navbar { position: relative; height: 105px; display: flex; border: 2px solid #080808; background: #222; font-family: Lato, sans-serif; font-size: 28.500px; color: #9d9d9d; }
.brand { margin: 22px 0 0 29px; width: 221px; font-size: 36px; line-height: 48px; letter-spacing: 0; white-space: nowrap; }
.field { width: 357px; height: 68px; margin-top: 16px; background: #fff; border: 2px solid #ccc; border-radius: 8px; box-shadow: inset 0 2px 2px rgba(0,0,0,.08); }
.button { width: 139px; height: 68px; margin: 16px 0 0 8px; background: #eee; color: #333; border-radius: 8px; font: 28px/71px "Liberation Sans", sans-serif; letter-spacing: -.3px; text-align: center; }
.links { display: flex; margin-left: auto; height: 93px; align-items: center; }
.links a { display: flex; align-items: center; }
.links a svg { margin-right: 14px; margin-bottom: 2px; width: 27px; height: 27px; }
.links span { white-space: nowrap; line-height: 40px; padding-top: 1px; letter-spacing: -.1px; }
.albums { width: 194px; }
.songs { width: 177px; }
.add { width: 237px; }
.logout { width: 186px; }
.active { color: #fff; -webkit-text-stroke: .4px #fff; }
.links .songs svg { height: 28px; margin-right: 15px; }
.links .add svg { width: 26px; margin-right: 16px; }
.links .add span, .links .logout span { letter-spacing: -.4px; }
.links .logout svg { margin-right: 15px; }
.songlist { position: relative; margin: 36px 0 0; padding: 0 0 0 80px; list-style: none; font: 28.500px/40px Lato, sans-serif; color: #337ac2; }
.songlist li { display: flex; align-items: center; }
.songlist li::before { content: ""; width: 12px; height: 12px; margin: 4px 15px 0 -26px; border-radius: 50%; background: #333; }
.status { position: absolute; left: 0; bottom: 0; width: 340px; height: 37px; padding-left: 8px; font-size: 22.500px; letter-spacing: .1px; line-height: 36px; white-space: nowrap; color: #333; background: linear-gradient(#fff, #d8d8d8); border-top: 2px solid #bbb; border-right: 2px solid #bbb; border-radius: 0 6px 0 0; }
```
